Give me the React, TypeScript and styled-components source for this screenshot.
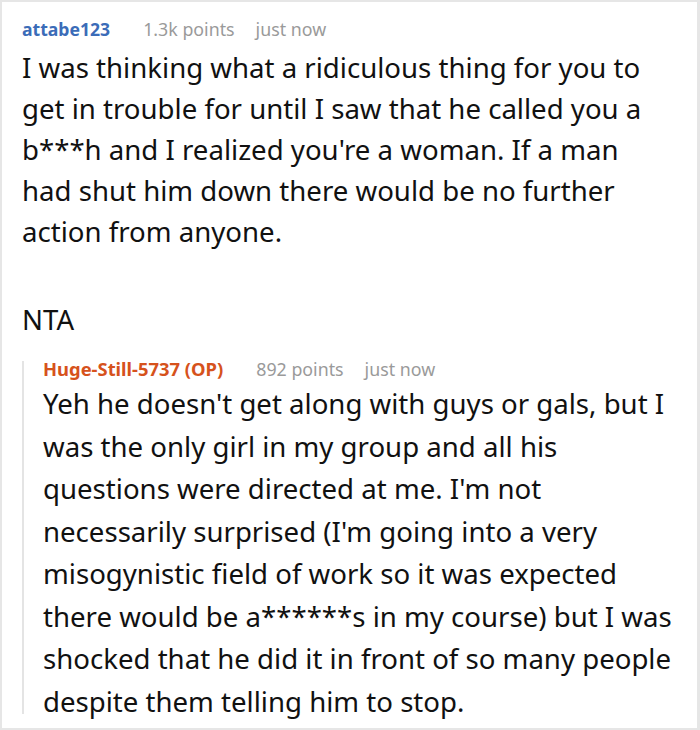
import React from "react";
import styled, { createGlobalStyle } from "styled-components";

const GlobalStyle = createGlobalStyle`
  html, body {
    margin: 0;
    padding: 0;
    background: #ffffff;
  }
  body {
    font-family: "Noto Sans", "Open Sans", sans-serif;
  }
`;

const Frame = styled.div`
  width: 700px;
  height: 730px;
  box-sizing: border-box;
  border: 2px solid #e6e6e6;
  border-right-width: 3px;
  padding: 14px 20px 0 20px;
  overflow: hidden;
`;

const Comment = styled.div`
  display: flex;
  flex-direction: column;
`;

const Meta = styled.div<{ $indent?: boolean }>`
  display: flex;
  align-items: baseline;
  height: 26px;
  font-size: 17.8px;
  line-height: 26px;
  padding-left: ${(p) => (p.$indent ? "21px" : "0")};
`;

const Author = styled.span<{ $op?: boolean }>`
  font-weight: 700;
  font-size: ${(p) => (p.$op ? "18.4px" : "17.6px")};
  margin-right: ${(p) => (p.$op ? "33px" : "33px")};
  color: ${(p) => (p.$op ? "#d6521c" : "#3b6cb8")};
`;

const Info = styled.span`
  color: #9a9a9a;
  & + & {
    margin-left: 21px;
  }
`;

const Body = styled.div<{ $lh: number }>`
  font-size: 27.6px;
  line-height: ${(p) => p.$lh}px;
  color: #111111;
  margin-top: 5px;
  white-space: nowrap;
  p {
    margin: 0;
  }
  p + p {
    margin-top: 47px;
  }
`;

const Reply = styled.div`
  position: relative;
  margin-top: 16px;
  display: flex;
  flex-direction: column;
  &::before {
    content: "";
    position: absolute;
    left: 0;
    top: 5px;
    bottom: 8px;
    width: 2px;
    background: #e4e4e4;
  }
`;

const ReplyBody = styled.div`
  padding-left: 21px;
  margin-top: -5px;
`;

export default function App() {
  return (
    <>
      <GlobalStyle />
      <Frame>
        <Comment>
          <Meta>
            <Author>attabe123</Author>
            <Info>1.3k points</Info>
            <Info>just now</Info>
          </Meta>
          <Body $lh={41}>
            <p>
              I was thinking what a ridiculous thing for you to
              <br />
              get in trouble for until I saw that he called you a
              <br />
              b***h and I realized you're a woman. If a man
              <br />
              had shut him down there would be no further
              <br />
              action from anyone.
            </p>
            <p>NTA</p>
          </Body>
        </Comment>
        <Reply>
          <Meta $indent>
            <Author $op>Huge-Still-5737 (OP)</Author>
            <Info>892 points</Info>
            <Info>just now</Info>
          </Meta>
          <ReplyBody>
            <Body $lh={42.5}>
              <p>
                Yeh he doesn't get along with guys or gals, but I
                <br />
                was the only girl in my group and all his
                <br />
                questions were directed at me. I'm not
                <br />
                necessarily surprised (I'm going into a very
                <br />
                misogynistic field of work so it was expected
                <br />
                there would be a******s in my course) but I was
                <br />
                shocked that he did it in front of so many people
                <br />
                despite them telling him to stop.
              </p>
            </Body>
          </ReplyBody>
        </Reply>
      </Frame>
    </>
  );
}
